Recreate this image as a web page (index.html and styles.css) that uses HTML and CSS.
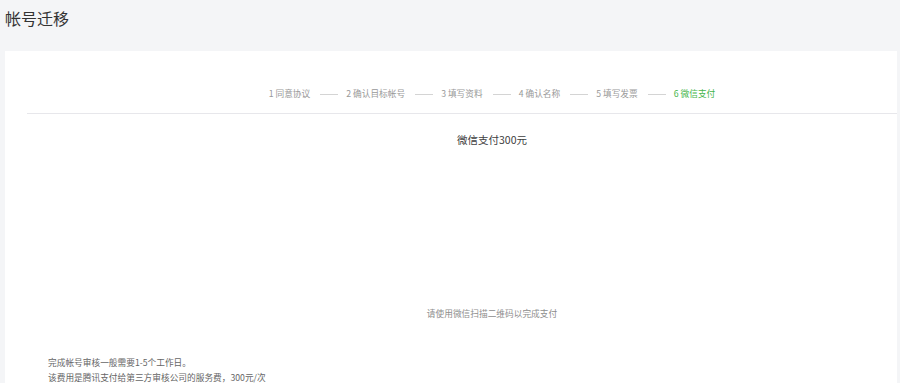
FILE: index.html
```html
<!DOCTYPE html>
<html lang="zh-CN">
<head>
<meta charset="utf-8">
<title>帐号迁移</title>
<link rel="stylesheet" href="styles.css">
</head>
<body>
<h1 class="page-title">帐号迁移</h1>
<div class="card">
  <div class="inner">
    <div class="steps">
      <span class="step">1 同意协议</span><span class="sep"></span>
      <span class="step">2 确认目标帐号</span><span class="sep"></span>
      <span class="step">3 填写资料</span><span class="sep"></span>
      <span class="step">4 确认名称</span><span class="sep"></span>
      <span class="step">5 填写发票</span><span class="sep"></span>
      <span class="step current">6 微信支付</span>
    </div>
    <div class="pay-title">微信支付300元</div>
    <div class="qr"></div>
    <div class="qr-tip">请使用微信扫描二维码以完成支付</div>
    <div class="notes">
      <p>完成帐号审核一般需要1-5个工作日。</p>
      <p>该费用是腾讯支付给第三方审核公司的服务费，300元/次</p>
    </div>
  </div>
</div>
</body>
</html>
```
FILE: styles.css
```css
html, body {
  margin: 0;
  padding: 0;
  background: #f4f5f7;
  font-family: "Noto Sans CJK SC", "Microsoft YaHei", sans-serif;
  overflow: hidden;
}
.page-title {
  margin: 0;
  padding-left: 5px;
  font-size: 16px;
  line-height: 36px;
  font-weight: normal;
  color: #333;
}
.card {
  margin: 15px 3px 0 5px;
  background: #fff;
  height: 340px;
  overflow: hidden;
}
.inner {
  width: 930px;
  margin-left: 22px;
}
.steps {
  display: flex;
  justify-content: center;
  align-items: center;
  padding: 33px 0 9px;
  border-bottom: 1px solid #e7e7eb;
  font-size: 8.7px;
  line-height: 20px;
  color: #999;
}
.step.current {
  color: #44b549;
}
.sep {
  display: inline-block;
  width: 18px;
  height: 1px;
  background: #d4d4d4;
  margin: 0 8px 0 10px;
}
.pay-title {
  margin-top: 16px;
  text-align: center;
  font-size: 10.5px;
  line-height: 20px;
  color: #404040;
}
.qr {
  height: 156px;
}
.qr-tip {
  text-align: center;
  font-size: 8.7px;
  line-height: 16px;
  color: #8d8d8d;
}
.notes {
  margin-top: 33px;
  padding-left: 21px;
  font-size: 8.7px;
  line-height: 15px;
  color: #666;
}
.notes p {
  margin: 0;
}
```
